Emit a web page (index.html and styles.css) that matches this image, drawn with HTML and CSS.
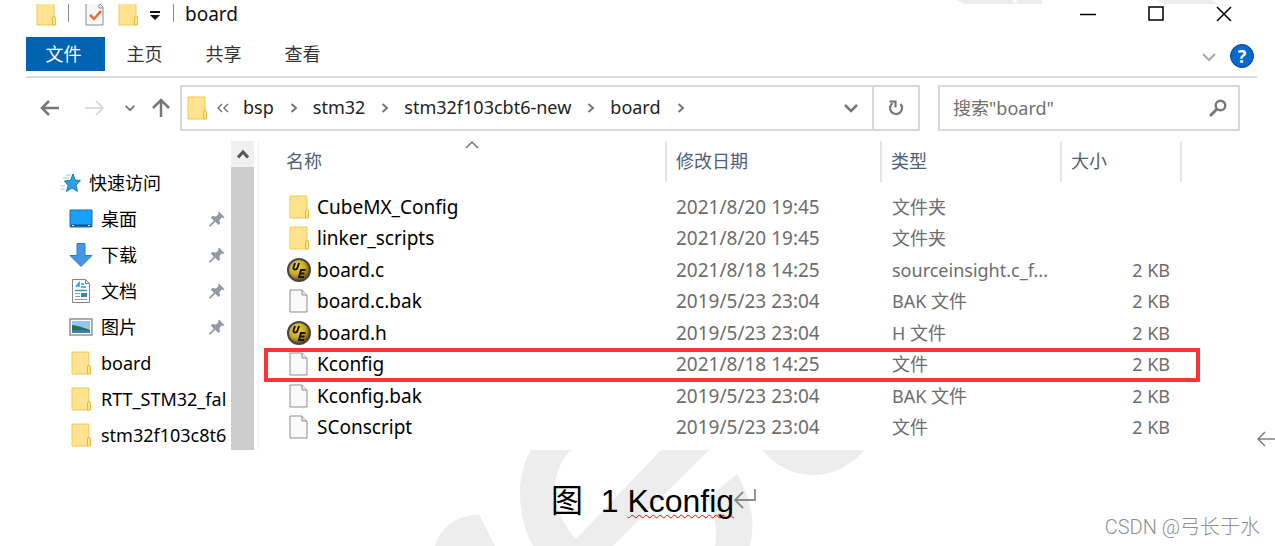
FILE: index.html
```html
<!DOCTYPE html>
<html lang="zh-CN">
<head>
    <meta charset="UTF-8" />
    <meta name="viewport" content="width=device-width, initial-scale=1.0"/>
    <title>board</title>
    <link rel="stylesheet" href="styles.css">
</head>
<body>
    <!-- shared icons -->
    <svg class="sprite" aria-hidden="true">
        <symbol id="folder" viewBox="0 0 20 24">
            <path d="M1 1h17v15h1v7H1z" fill="#ffe69a"/>
            <path d="M1 1h17v22H1z" fill="#ffe391" stroke="#efc94f"/>
            <path d="M16.500 15.500q0-1 1.500-1t1.500 1v7.500h-3z" fill="#ffe391" stroke="#e5bb3c"/>
        </symbol>
        <symbol id="file" viewBox="0 0 20 24">
            <path d="M1 1h12l5 5v17H1z" fill="#fafafa" stroke="#8e8e8e"/>
            <path d="M13 1v5h5" fill="#e9e9e9" stroke="#8e8e8e"/>
        </symbol>
        <symbol id="ue" viewBox="0 0 24 24">
            <defs>
                <radialGradient id="gold" cx="40%" cy="35%" r="65%">
                    <stop offset="0" stop-color="#f3dd45"/>
                    <stop offset=".6" stop-color="#c5a51d"/>
                    <stop offset="1" stop-color="#5b4a10"/>
                </radialGradient>
            </defs>
            <circle cx="12" cy="12" r="11" fill="url(#gold)" stroke="#45464a" stroke-width="2"/>
            <path d="M8 5L6.500 9.500q-.5 2 1.500 2t2.500-2L12 5" fill="none" stroke="#161302" stroke-width="2"/>
            <path d="M18.500 12h-4.500L12 19h5M13 15.500h4.500" fill="none" stroke="#161302" stroke-width="2"/>
        </symbol>
        <symbol id="pin" viewBox="0 0 16 16">
            <path d="M10 .5L15.500 6l-1 1-1.500-.5-2.500 2.500.5 3.500-1.500 1.500-3.200-3.200L1.500 15.500H0V14.500l4.800-4.800L1.800 6.500l1.500-1.500 3.700.5L9.500 3 9 1.500z" fill="#919ba5"/>
        </symbol>
        <symbol id="next" viewBox="0 0 8 10">
            <path d="M1.500 1L6 5 1.500 9" fill="none" stroke="#777" stroke-width="2"/>
        </symbol>
        <symbol id="down" viewBox="0 0 14 10">
            <path d="M1 2l6 6 6-6" fill="none" stroke="currentColor" stroke-width="2.500"/>
        </symbol>
    </svg>

    <svg class="watermark" viewBox="0 0 1275 546" aria-hidden="true">
        <path d="M957 0h55l3 4h-51zM1016 0h26v4h-25zM1157 0h54l7 4h-53z"/>
        <path d="M531 450C516 475 516 515 533 546H613L709 450H661L576 539C550 511 548 473 571 450z"/>
        <path d="M737 474C753 502 755 525 750 546H715C718 528 714 508 706 500z"/>
        <path d="M762 450Q784 475 813 475T865 450z"/>
        <path d="M435 546Q443 518 479 514L495 546z"/>
    </svg>

    <div class="figure">
        <main class="explorer">
            <header class="titlebar">
                <div class="quick">
                    <svg class="ico"><use href="#folder"/></svg>
                    <span class="sep"></span>
                    <svg class="ico" viewBox="0 0 20 24">
                        <path d="M1 1h13l4 4v18H1z" fill="#f7f7f9" stroke="#8a8d92"/>
                        <path d="M14 1v5h4" fill="none" stroke="#8a8d92"/>
                        <path d="M5 13l4 4 7-8" fill="none" stroke="#ee6a33" stroke-width="2.500"/>
                    </svg>
                    <svg class="ico"><use href="#folder"/></svg>
                    <svg class="drop" viewBox="0 0 12 10"><path d="M1 0h10v2H1zM1 4h10L6 9z" fill="#111"/></svg>
                    <span class="sep"></span>
                </div>
                <h1>board</h1>
                <div class="controls">
                    <button aria-label="最小化"><svg viewBox="0 0 16 16"><path d="M0 9.500h16" stroke="#000" stroke-width="1.500"/></svg></button>
                    <button aria-label="最大化"><svg viewBox="0 0 16 16"><path d="M1 2h14v13H1z" fill="none" stroke="#000" stroke-width="1.500"/></svg></button>
                    <button aria-label="关闭"><svg viewBox="0 0 16 16"><path d="M1 2l14 14M15 2L1 16" stroke="#000" stroke-width="1.500"/></svg></button>
                </div>
            </header>

            <nav class="ribbon">
                <button class="active">文件</button>
                <button>主页</button>
                <button>共享</button>
                <button>查看</button>
                <svg class="expand" viewBox="0 0 14 10"><path d="M1 2l6 6 6-6" fill="none" stroke="#aaa" stroke-width="2"/></svg>
                <button class="help" aria-label="帮助">?</button>
            </nav>

            <div class="toolbar">
                <div class="history">
                    <button aria-label="后退"><svg width="20" height="16" viewBox="0 0 20 16"><path d="M19 8H2M9 1L2 8l7 7" fill="none" stroke="#777" stroke-width="2.500"/></svg></button>
                    <button aria-label="前进"><svg width="20" height="16" viewBox="0 0 20 16"><path d="M0 8h18M11 1l7 7-7 7" fill="none" stroke="#dcdcdc" stroke-width="2"/></svg></button>
                    <button aria-label="最近"><svg width="10" height="8" viewBox="0 0 14 10"><use href="#down"/></svg></button>
                    <button aria-label="向上"><svg width="18" height="20" viewBox="0 0 18 20"><path d="M9 19V2M1 10l8-8 8 8" fill="none" stroke="#777" stroke-width="2.500"/></svg></button>
                </div>
                <div class="address">
                    <svg class="ico"><use href="#folder"/></svg>
                    <svg class="more" viewBox="0 0 12 10"><path d="M5 1L1 5l4 4M11 1L7 5l4 4" fill="none" stroke="#777" stroke-width="1.500"/></svg>
                    <a href="#">bsp</a>
                    <svg class="next"><use href="#next"/></svg>
                    <a href="#">stm32</a>
                    <svg class="next"><use href="#next"/></svg>
                    <a href="#">stm32f103cbt6-new</a>
                    <svg class="next"><use href="#next"/></svg>
                    <a href="#">board</a>
                    <svg class="next"><use href="#next"/></svg>
                    <button class="previous" aria-label="以前的位置"><svg width="14" height="10"><use href="#down"/></svg></button>
                    <button class="refresh" aria-label="刷新">
                        <svg width="16" height="18" viewBox="0 0 16 18"><path d="M12.500 5a6 6 0 1 1-8 -.8" fill="none" stroke="#777" stroke-width="2.200"/><path d="M1.500 2.500h6v6" fill="none" stroke="#777" stroke-width="2.200"/></svg>
                    </button>
                </div>
                <div class="search">
                    <input type="text" aria-label="搜索" placeholder='搜索"board"'>
                    <svg width="18" height="18" viewBox="0 0 18 18"><circle cx="11.500" cy="6.500" r="4.800" fill="none" stroke="#777" stroke-width="2.400"/><path d="M8 10l-7 7" stroke="#777" stroke-width="2.800"/></svg>
                </div>
            </div>

            <div class="content">
                <aside>
                    <ul class="tree">
                        <li class="root">
                            <svg class="kind" viewBox="0 0 20 20"><path d="M12 1l2 6 5.500.500-4.500 4.500 1.500 6.500-5.500-3.500L5.500 18.500l1.500-6L3.500 8 9.500 7.500z" fill="#2ba0e8" stroke="#1979bd"/><path d="M5 2h5M2 5h6M0 13h4M0 16h4" stroke="#8ccdf5"/></svg>
                            快速访问
                        </li>
                        <li>
                            <svg class="kind" viewBox="0 0 24 24"><path d="M1 3h22v17H1z" fill="#18a0fb" stroke="#176fae"/><path d="M2 18.500h20" stroke="#0a4e86" stroke-width="2"/><path d="M3 18.500h2M19 18.500h2" stroke="#fff"/></svg>
                            桌面<svg class="pin"><use href="#pin"/></svg>
                        </li>
                        <li>
                            <svg class="kind" viewBox="0 0 24 24"><path d="M8 .5h8v12h7L12 23.500 1 12.500h7z" fill="#4398e3" stroke="#2b7dca"/></svg>
                            下载<svg class="pin"><use href="#pin"/></svg>
                        </li>
                        <li>
                            <svg class="kind" viewBox="0 0 24 24"><path d="M3.500 .5h13l4 4v19h-17z" fill="#fff" stroke="#858585"/><path d="M16.500 .5v4h4" fill="none" stroke="#858585"/><path d="M7 8l3-4v4M12 5h3M12 8h5M6 11.500h12" fill="none" stroke="#219bdc" stroke-width="1.500"/><path d="M6 14.500h5M6 17.500h5M6 20.500h12" stroke="#999"/><path d="M12 14h6v4h-6z" fill="#3c86ad"/></svg>
                            文档<svg class="pin"><use href="#pin"/></svg>
                        </li>
                        <li>
                            <svg class="kind" viewBox="0 0 24 24"><path d="M1 4h22v16H1z" fill="#fff" stroke="#929292" stroke-width="1.500"/><path d="M3 6h18v12H3z" fill="#8fc7ef"/><path d="M3 10q8 1 18 5v3H3z" fill="#2d6b5c"/><path d="M3 15.500q9-1 18 0V18H3z" fill="#3b7fae"/></svg>
                            图片<svg class="pin"><use href="#pin"/></svg>
                        </li>
                        <li><svg class="kind"><use href="#folder"/></svg>board</li>
                        <li><svg class="kind"><use href="#folder"/></svg>RTT_STM32_fal</li>
                        <li><svg class="kind"><use href="#folder"/></svg>stm32f103c8t6</li>
                    </ul>
                    <div class="scrollbar">
                        <button aria-label="向上滚动"><svg width="12" height="10" viewBox="0 0 12 10"><path d="M1 8.500l5-5.500 5 5.500" fill="none" stroke="#555" stroke-width="3"/></svg></button>
                    </div>
                </aside>

                <div class="listing">
                    <table>
                        <thead>
                            <tr>
                                <th><div>名称</div><svg class="sort" viewBox="0 0 14 8"><path d="M1 7l6-6 6 6" fill="none" stroke="#777" stroke-width="1.500"/></svg></th>
                                <th class="date"><div>修改日期</div></th>
                                <th class="type"><div>类型</div></th>
                                <th class="size"><div>大小</div></th>
                                <td class="rest"></td>
                            </tr>
                        </thead>
                        <tbody>
                            <tr><td><span class="entry"><svg class="kind"><use href="#folder"/></svg>CubeMX_Config</span></td><td>2021/8/20 19:45</td><td>文件夹</td><td></td><td></td></tr>
                            <tr><td><span class="entry"><svg class="kind"><use href="#folder"/></svg>linker_scripts</span></td><td>2021/8/20 19:45</td><td>文件夹</td><td></td><td></td></tr>
                            <tr><td><span class="entry"><svg class="kind"><use href="#ue"/></svg>board.c</span></td><td>2021/8/18 14:25</td><td>sourceinsight.c_f...</td><td>2 KB</td><td></td></tr>
                            <tr><td><span class="entry"><svg class="kind"><use href="#file"/></svg>board.c.bak</span></td><td>2019/5/23 23:04</td><td>BAK 文件</td><td>2 KB</td><td></td></tr>
                            <tr><td><span class="entry"><svg class="kind"><use href="#ue"/></svg>board.h</span></td><td>2019/5/23 23:04</td><td>H 文件</td><td>2 KB</td><td></td></tr>
                            <tr class="marked"><td><span class="entry"><svg class="kind"><use href="#file"/></svg>Kconfig</span></td><td>2021/8/18 14:25</td><td>文件</td><td>2 KB</td><td></td></tr>
                            <tr><td><span class="entry"><svg class="kind"><use href="#file"/></svg>Kconfig.bak</span></td><td>2019/5/23 23:04</td><td>BAK 文件</td><td>2 KB</td><td></td></tr>
                            <tr><td><span class="entry"><svg class="kind"><use href="#file"/></svg>SConscript</span></td><td>2019/5/23 23:04</td><td>文件</td><td>2 KB</td><td></td></tr>
                        </tbody>
                    </table>
                </div>
            </div>
        </main>
        <svg class="mark" viewBox="0 0 18 16"><path d="M18 8H2M8 1L1 8l7 7" fill="none" stroke="#808080" stroke-width="1.500"/></svg>
    </div>

    <footer>
        <p class="caption">图  1 <span class="typo">Kconfig</span><svg class="enter" viewBox="0 0 22 20"><path d="M21 0v11H2M9 3L1 11l8 8" fill="none" stroke="#8a8a8a" stroke-width="1.800"/></svg></p>
        <p class="credit">CSDN @弓长于水</p>
    </footer>
</body>
</html>
```
FILE: styles.css
```css
* {
    box-sizing: border-box;
}
body {
    margin: 0;
    background: #fff;
    color: #111;
    font: 18px/24px "Noto Sans", "Noto Sans CJK SC", sans-serif;
}
h1, p, ul {
    margin: 0;
    padding: 0;
}
button {
    display: flex;
    align-items: center;
    justify-content: center;
    padding: 0;
    border: 0;
    background: none;
    color: inherit;
    font: inherit;
}
svg {
    display: block;
    flex: none;
}
.sprite {
    position: absolute;
    width: 0;
    height: 0;
}
.watermark {
    position: absolute;
    top: 0;
    left: 0;
    width: 100%;
    z-index: -1;
    fill: #ededed;
}
.figure {
    display: flex;
    align-items: flex-end;
    padding-top: 4px;
}
.explorer {
    flex: 1;
    min-width: 0;
    margin-left: 26px;
    background: #fff;
}
.mark {
    width: 18px;
    height: 16px;
    margin-bottom: 3px;
}
.ico {
    width: 20px;
    height: 24px;
}

/* title bar */
.titlebar {
    display: flex;
    align-items: flex-start;
    height: 33px;
}
.quick {
    display: flex;
    align-items: flex-end;
    height: 22px;
    padding-left: 10px;
    overflow: hidden;
}
.quick .sep {
    width: 1px;
    height: 18px;
    margin: 0 16px 4px 12px;
    background: #888;
}
.quick .ico + .ico {
    margin-left: 13px;
}
.quick .drop {
    width: 12px;
    height: 10px;
    margin: 0 0 5px 11px;
}
.quick .drop + .sep {
    margin-right: 11px;
}
h1 {
    font-size: 19px;
    font-weight: 400;
    line-height: 20px;
}
.controls {
    display: flex;
    gap: 52px;
    margin-left: auto;
    padding-right: 25px;
}
.controls svg {
    width: 16px;
    height: 18px;
}

/* ribbon */
.ribbon {
    display: flex;
    align-items: flex-start;
    height: 41px;
    border-bottom: 2px solid #dcdcdc;
}
.ribbon button {
    width: 79px;
    height: 34px;
    color: #333;
}
.ribbon .active {
    padding-right: 4px;
    background: #0063b1;
    color: #fff;
}
.ribbon .expand {
    width: 14px;
    height: 10px;
    margin: 15px 14px 0 auto;
}
.ribbon .help {
    width: 24px;
    height: 24px;
    margin: 7px 3px 0 0;
    border: 1px solid #064a8c;
    border-radius: 50%;
    background: #0768cf;
    color: #fff;
    font-weight: 700;
}

/* navigation and address */
.toolbar {
    display: flex;
    padding: 7px 17px 10px 14px;
}
.history {
    display: flex;
    align-items: center;
    width: 140px;
    color: #777;
}
.history button:nth-child(2) {
    margin-left: 25px;
}
.history button:nth-child(3) {
    margin-left: 20px;
}
.history button:nth-child(4) {
    margin-left: 17px;
}
.address {
    display: flex;
    flex: 1;
    align-items: center;
    height: 46px;
    padding-left: 5px;
    border: 2px solid #d9d9d9;
}
.address a {
    color: #222;
    text-decoration: none;
    line-height: 26px;
    padding-bottom: 2px;
}
.address .more {
    width: 12px;
    height: 10px;
    margin: 0 14px 0 10px;
}
.address .next {
    width: 8px;
    height: 10px;
    margin: 0 15px 0 16px;
}
.address .previous {
    margin-left: auto;
    width: 42px;
    color: #777;
}
.address .refresh {
    align-self: stretch;
    width: 46px;
    border-left: 2px solid #d9d9d9;
}
.search {
    display: flex;
    align-items: center;
    width: 302px;
    height: 46px;
    margin-left: 18px;
    padding: 0 11px 0 13px;
    border: 2px solid #d9d9d9;
}
.search input {
    flex: 1;
    min-width: 0;
    padding: 0;
    border: 0;
    outline: 0;
    background: none;
    font: inherit;
}
.search input::placeholder {
    color: #707070;
}

/* quick access tree */
.content {
    display: flex;
    height: 309px;
}
aside {
    display: flex;
    width: 233px;
    border-right: 1px solid #f2f2f2;
}
.tree {
    flex: 1;
    min-width: 0;
    padding-top: 24px;
    list-style: none;
    color: #000;
}
.tree li {
    display: flex;
    align-items: center;
    height: 36px;
    padding-left: 43px;
    overflow: hidden;
    white-space: nowrap;
}
.tree .root {
    padding-left: 35px;
}
.kind {
    width: 24px;
    height: 24px;
    margin-right: 8px;
}
.root .kind {
    width: 20px;
    height: 20px;
}
.pin {
    width: 16px;
    height: 16px;
    margin: 0 6px 0 auto;
}
.scrollbar {
    width: 23px;
    margin-right: 4px;
    background: #cdcdcd;
}
.scrollbar button {
    width: 23px;
    height: 26px;
    background: #f0f0f0;
}

/* file list */
.listing {
    flex: 1;
    min-width: 0;
    padding-left: 18px;
}
table {
    width: 100%;
    table-layout: fixed;
    border-collapse: collapse;
    color: #6d6d6d;
}
th, td {
    padding: 0;
    text-align: left;
    font-weight: 400;
    line-height: 24px;
    white-space: nowrap;
}
th {
    position: relative;
    height: 50px;
    vertical-align: top;
    color: #4c607a;
}
th div {
    height: 41px;
    padding: 8px 0 0 9px;
    border-right: 2px solid #e5e5e5;
}
.date {
    width: 215px;
}
.type {
    width: 180px;
}
.size {
    width: 120px;
}
.rest {
    width: 75px;
}
.sort {
    position: absolute;
    top: 0;
    left: 50%;
    width: 14px;
    height: 8px;
    margin-left: -7px;
}
tbody tr {
    height: 31px;
}
tbody tr:nth-child(even) {
    height: 32px;
}
tbody td {
    padding-left: 10px;
}
tbody td:nth-child(2) {
    padding-left: 9px;
    font-size: 19px;
}
tbody td:nth-child(4) {
    padding-right: 12px;
    text-align: right;
}
.entry {
    display: flex;
    align-items: center;
    color: #000;
    font-size: 19px;
}
.entry .kind {
    margin-right: 6px;
}
.marked {
    position: relative;
}
.marked td:first-child::after {
    content: "";
    position: absolute;
    inset: 0 57px -2px -13px;
    border: 4px solid #fb3435;
}

/* caption under the figure */
footer {
    position: relative;
    padding: 32px 0 26px;
}
.caption {
    padding-left: 32px;
    color: #000;
    font: 32px/38px "Liberation Sans", "Noto Sans CJK SC", sans-serif;
    text-align: center;
    white-space: pre;
}
.typo {
    text-decoration: underline wavy #f00 1px;
    text-decoration-skip-ink: none;
    text-underline-offset: 2px;
}
.enter {
    display: inline-block;
    width: 22px;
    height: 20px;
    vertical-align: 3px;
}
.credit {
    position: absolute;
    right: 15px;
    bottom: 7px;
    color: #8f8f8f;
    font: 300 20px/24px Roboto, "Noto Sans CJK SC", sans-serif;
}
```
